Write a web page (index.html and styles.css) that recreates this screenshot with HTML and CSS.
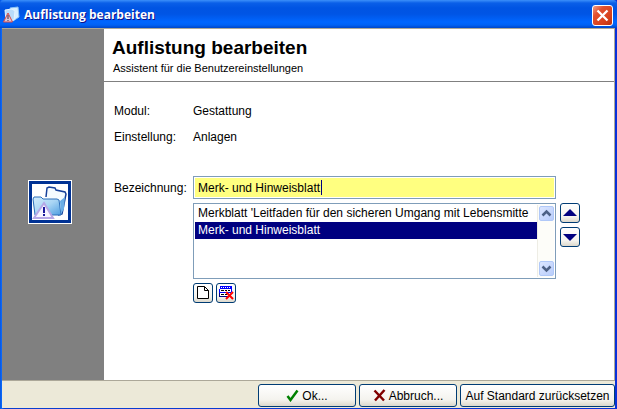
FILE: index.html
```html
<!DOCTYPE html>
<html lang="de">
<head>
  <meta charset="UTF-8">
  <meta name="viewport" content="width=device-width, initial-scale=1.0">
  <title>Auflistung bearbeiten</title>
  <link rel="stylesheet" href="styles.css">
</head>
<body>
  <div class="window">
    <header class="titlebar">
      <svg class="titlebar-icon" width="18" height="18" viewBox="0 0 18 18">
        <path d="M7 2l8-1 1 10-6 4z" fill="#d8efff" stroke="#8fc4f5"/>
        <path d="M2 4l7-1 3 2-1 9-8 1z" fill="#b9dcfa" stroke="#e4f4ff"/>
        <path d="M5 7l4.500 9H.5z" fill="#d9c8d8" stroke="#d84848"/>
        <path d="M5 9v4M5 14v1" stroke="#604050" stroke-width="1.200"/>
      </svg>
      <span class="titlebar-text">Auflistung bearbeiten</span>
      <button type="button" class="close" aria-label="Schließen">
        <svg width="21" height="21" viewBox="0 0 21 21">
          <path d="M5.500 5.500l10 10M15.500 5.500l-10 10" stroke="#fff" stroke-width="2.300"/>
        </svg>
      </button>
    </header>

    <form class="dialog">
      <div class="main">
        <aside class="sidebar">
          <svg width="44" height="44" viewBox="0 0 44 44">
            <defs>
              <linearGradient id="folder" x1="0" y1="0" x2="1" y2="1">
                <stop offset="0" stop-color="#d3edfc"/>
                <stop offset="0.500" stop-color="#a9d5f4"/>
                <stop offset="1" stop-color="#4e9ee0"/>
              </linearGradient>
            </defs>
            <rect width="44" height="44" fill="#fff"/>
            <rect x="1" y="1" width="42" height="42" fill="#003294"/>
            <rect x="4" y="4" width="36" height="36" fill="#fff"/>
            <path d="M18 17l1-9 2-1 6 1 1 2 9 2 1 2-4 20-4 1" fill="#f4fbff" stroke="#17419a" stroke-width="1.500"/>
            <path d="M7 35L5 19l1-2h7l2 2h14l2 1 2 15H9z" fill="url(#folder)" stroke="#2c6fba"/>
            <path d="M32 21l1 13 3-5 1-12z" fill="#6aaee6"/>
            <path d="M16 23l9 15H6z" fill="#f5f3ff" stroke="#b5a8e6" stroke-width="2"/>
            <path d="M16 27v6M16 34v2" stroke="#1a1a9c" stroke-width="2"/>
          </svg>
        </aside>

        <section class="content">
          <div class="heading">
            <h1>Auflistung bearbeiten</h1>
            <p>Assistent für die Benutzereinstellungen</p>
          </div>

          <div class="fields">
            <span>Modul:</span>
            <span>Gestattung</span>
            <span>Einstellung:</span>
            <span>Anlagen</span>
          </div>

          <div class="editor">
            <label for="bezeichnung">Bezeichnung:</label>
            <div class="text-field">
              <input type="text" id="bezeichnung" value="Merk- und Hinweisblatt">
              <span class="caret"></span>
            </div>

            <div class="list">
              <select size="4" aria-label="Einträge">
                <option>Merkblatt 'Leitfaden für den sicheren Umgang mit Lebensmitte</option>
                <option selected>Merk- und Hinweisblatt</option>
              </select>
              <div class="scrollbar">
                <button type="button" aria-label="Nach oben blättern">
                  <svg width="15" height="15" viewBox="0 0 15 15"><path d="M3.500 9.500l4-4 4 4" fill="none" stroke="#4d6185" stroke-width="2.500"/></svg>
                </button>
                <button type="button" aria-label="Nach unten blättern">
                  <svg width="15" height="15" viewBox="0 0 15 15"><path d="M3.500 5.500l4 4 4-4" fill="none" stroke="#4d6185" stroke-width="2.500"/></svg>
                </button>
              </div>
            </div>
            <div class="order">
              <button type="button" class="tool" aria-label="Nach oben">
                <svg width="16" height="16" viewBox="0 0 16 16"><path d="M8 4l7 7H1z" fill="#000080"/></svg>
              </button>
              <button type="button" class="tool" aria-label="Nach unten">
                <svg width="16" height="16" viewBox="0 0 16 16"><path d="M8 12l7-7H1z" fill="#000080"/></svg>
              </button>
            </div>

            <div class="tools">
              <button type="button" class="tool" aria-label="Neu">
                <svg width="16" height="16" viewBox="0 0 16 16">
                  <path d="M2.500 1.500h7l4 4v8h-11zM9.500 1.500v4h4" fill="#fff" stroke="#000"/>
                </svg>
              </button>
              <button type="button" class="tool" aria-label="Löschen">
                <svg width="16" height="16" viewBox="0 0 16 16" shape-rendering="crispEdges">
                  <path d="M2 1h12v3H2z" fill="#0000ff"/>
                  <path d="M3 2h1v1H3zM5 2h1v1H5zM7 2h1v1H7zM9 2h1v1H9zM11 2h1v1h-1z" fill="#fff"/>
                  <path d="M1 5h12v2H1z" fill="#fff"/>
                  <path d="M1 4h1v3H1zM13 4h1v3h-1zM1 7h12v1H1z" fill="#0000ff"/>
                  <path d="M3 5h3v1H3zM7 5h2v1H7zM10 5h2v1h-2z" fill="#000"/>
                  <path d="M1 8h12v3H1z" fill="#fff"/>
                  <path d="M1 8h1v3H1zM1 11h9v1H1z" fill="#000080"/>
                  <path d="M3 9h3v1H3zM7 9h2v1H7z" fill="#000"/>
                  <path d="M8 7l7 7M15 7l-7 7" stroke="#ff0000" stroke-width="2" shape-rendering="auto"/>
                </svg>
              </button>
            </div>
          </div>
        </section>
      </div>

      <footer class="footer">
        <button type="submit" class="action">
          <svg width="13" height="13" viewBox="0 0 13 13"><path d="M1.500 7l3 4L11.500 1.500" fill="none" stroke="#008000" stroke-width="2.500"/></svg>
          Ok...
        </button>
        <button type="button" class="action">
          <svg width="13" height="13" viewBox="0 0 13 13"><path d="M1.500 1.500l9.500 10M11.500 1L2 11.500" fill="none" stroke="#800000" stroke-width="2.500"/></svg>
          Abbruch...
        </button>
        <button type="reset" class="action action-wide">Auf Standard zurücksetzen</button>
      </footer>
    </form>
  </div>
</body>
</html>
```
FILE: styles.css
```css
* {
  box-sizing: border-box;
}
body {
  margin: 0;
  font-family: "Liberation Sans", Arial, sans-serif;
  font-size: 12px;
  line-height: 16px;
  color: #000;
}
button, input, select {
  font: inherit;
  color: inherit;
  margin: 0;
  padding: 0;
}
svg {
  display: block;
  flex: none;
}
.window {
  display: flex;
  flex-direction: column;
  min-height: 100vh;
  background: linear-gradient(90deg, #0855dd, #0a6cff 2px, #0a3fd0 4px, #0831d9);
}

/* Title bar */
.titlebar {
  display: flex;
  align-items: center;
  gap: 3px;
  height: 28px;
  padding: 2px 4px 0 3px;
  border-radius: 4px 4px 0 0;
  background: linear-gradient(#3c90fa, #0a5fe8 3px, #0054e3 8px, #0055e5 14px, #0066ff 22px, #0062f5 25px, #0046c8);
}
.titlebar-text {
  flex: 1;
  font-family: "Open Sans", sans-serif;
  font-size: 12px;
  font-weight: bold;
  color: #fff;
  text-shadow: 1px 1px #0f1089;
}
.close {
  width: 21px;
  height: 21px;
  border: 1px solid #fff;
  border-radius: 3px;
  background: linear-gradient(135deg, #f0a088, #e05030 30%, #d8411c 70%, #b83010);
  display: flex;
  align-items: center;
  justify-content: center;
}

/* Dialog body */
.dialog {
  flex: 1;
  display: flex;
  flex-direction: column;
  margin: 0 2px 1px 2px;
  background: #ece9d8;
}
.main {
  flex: 1;
  display: flex;
  border: solid #aca899;
  border-width: 1px 1px 1px 0;
}
.sidebar {
  width: 102px;
  display: flex;
  align-items: center;
  justify-content: center;
  padding: 0 6px 6px 0;
  background: #808080;
}
.content {
  flex: 1;
  min-width: 0;
  background: #fff;
}
.heading {
  padding: 8px 8px 5px;
  border-bottom: 1px solid #808080;
}
h1 {
  margin: 0;
  font-size: 19px;
  line-height: 22px;
}
.heading p {
  margin: 1px 0 0 1px;
  font-size: 11px;
}
.fields {
  display: grid;
  grid-template-columns: 79px 1fr;
  row-gap: 10px;
  padding: 21px 10px 31px;
}
.editor {
  display: grid;
  grid-template-columns: 75px minmax(0, 1fr) 20px;
  gap: 4px;
  padding: 0 34px 0 10px;
  align-items: center;
}

/* Text box */
.text-field {
  position: relative;
}
.text-field input {
  display: block;
  width: 100%;
  height: 23px;
  padding: 0 4px;
  border: 1px solid #7f9db9;
  outline: 1px solid #fff;
  outline-offset: -2px;
  background: #ffff80;
}
.caret {
  position: absolute;
  top: 4px;
  left: 128px;
  width: 1px;
  height: 15px;
  background: #000080;
}

/* List with its scrollbar */
.list {
  grid-column: 2;
  display: flex;
  height: 76px;
  padding: 1px;
  border: 1px solid #7f9db9;
  background: #fff;
}
.list select {
  flex: 1;
  min-width: 0;
  height: 100%;
  border: 0;
  border-radius: 0;
  outline: 0;
  background: #fff;
  overflow: hidden;
  scrollbar-width: none;
}
.list option {
  height: 17px;
  min-height: 17px;
  padding: 1px 3px 0;
  line-height: 16px;
  color: #000;
}
.list option:checked {
  background: #000080 linear-gradient(#000080, #000080);
  color: #fff;
  -webkit-text-fill-color: #fff;
}
.scrollbar {
  display: flex;
  flex-direction: column;
  justify-content: space-between;
  width: 17px;
  padding: 1px;
  background: #fdfdf9;
  border-left: 1px solid #eeede5;
}
.scrollbar button {
  width: 15px;
  height: 15px;
  border: 1px solid #b0c8f8;
  border-radius: 2px;
  background: linear-gradient(135deg, #dbe6ff, #b9cdfb);
  display: flex;
  align-items: center;
  justify-content: center;
}

/* Icon buttons */
.order {
  display: flex;
  flex-direction: column;
  gap: 4px;
  align-self: start;
}
.tools {
  grid-column: 2;
  display: flex;
  gap: 3px;
}
.tool, .action {
  border: 1px solid #003c74;
  border-radius: 3px;
  background: linear-gradient(#fff, #f4f3ee 70%, #dcd8cc);
  display: flex;
  align-items: center;
  justify-content: center;
}
.tool {
  width: 20px;
  height: 20px;
}

/* Buttons at the bottom */
.footer {
  display: flex;
  justify-content: flex-end;
  gap: 3px;
  padding: 3px 0 1px;
}
.action {
  width: 98px;
  height: 23px;
  gap: 3px;
  white-space: nowrap;
}
.action-wide {
  width: 155px;
}
```
